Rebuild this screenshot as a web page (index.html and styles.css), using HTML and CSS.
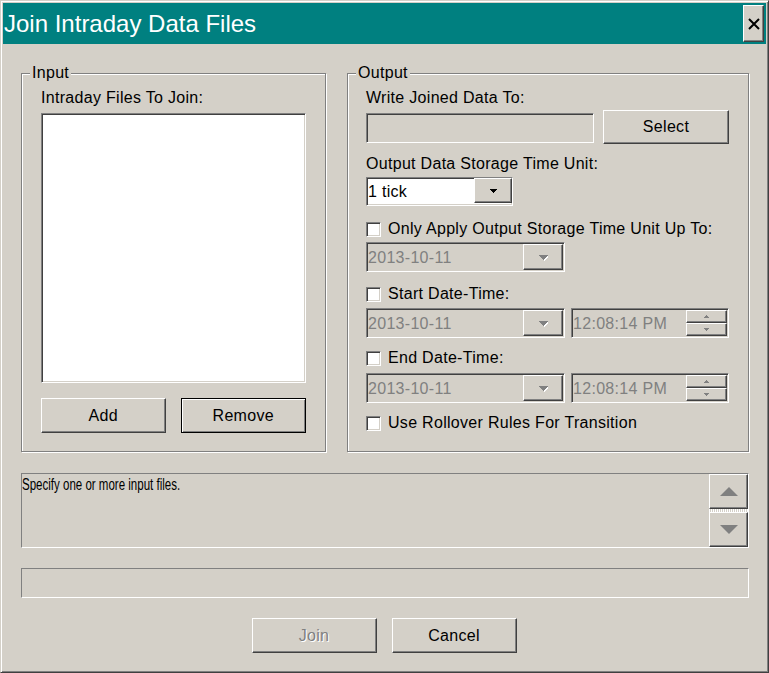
FILE: index.html
```html
<!DOCTYPE html>
<html>
<head>
<meta charset="utf-8">
<title>Join Intraday Data Files</title>
<link rel="stylesheet" href="styles.css">
</head>
<body>
<div class="window">
  <div class="titlebar">
    <span class="title">Join Intraday Data Files</span>
    <button class="raised close-btn" aria-label="Close">
      <svg width="12" height="12" viewBox="0 0 12 12"><path d="M1 1L11 11M11 1L1 11" stroke="#000" stroke-width="2" fill="none"/></svg>
    </button>
  </div>
  <div class="body">
    <div class="groups">
      <fieldset class="group">
        <legend>Input</legend>
        <div class="group-body input-body">
          <div class="label">Intraday Files To Join:</div>
          <div class="sunken listbox"></div>
          <div class="btn-row">
            <button class="raised btn">Add</button>
            <button class="btn btn-default">Remove</button>
          </div>
        </div>
      </fieldset>
      <fieldset class="group">
        <legend>Output</legend>
        <div class="group-body output-body">
          <div class="label">Write Joined Data To:</div>
          <div class="path-row">
            <div class="sunken path-field"></div>
            <button class="raised select-btn">Select</button>
          </div>
          <div class="label unit-label">Output Data Storage Time Unit:</div>
          <div class="sunken combo">
            <span class="combo-text">1 tick</span>
            <span class="raised drop-btn">
              <svg width="7" height="4" viewBox="0 0 7 4"><path d="M0 0h7v1H0zM1 1h5v1H1zM2 2h3v1H2zM3 3h1v1H3z" fill="#000"/></svg>
            </span>
          </div>
          <div class="check-row first-check"><span class="sunken checkbox"></span>Only Apply Output Storage Time Unit Up To:</div>
          <div class="picker-row row-a">
            <div class="sunken date-picker">
              <span class="picker-text">2013-10-11</span>
              <span class="raised dd-btn"><svg width="9" height="6" viewBox="0 0 9 6"><path d="M1 1h9v1H1zM2 2h7v1H2zM3 3h5v1H3zM4 4h3v1H4zM5 5h1v1H5z" fill="#fff"/><path d="M0 0h9v1H0zM1 1h7v1H1zM2 2h5v1H2zM3 3h3v1H3zM4 4h1v1H4z" fill="#808080"/></svg></span>
            </div>
          </div>
          <div class="check-row start-check"><span class="sunken checkbox"></span>Start Date-Time:</div>
          <div class="picker-row row-b">
            <div class="sunken date-picker">
              <span class="picker-text">2013-10-11</span>
              <span class="raised dd-btn"><svg width="9" height="6" viewBox="0 0 9 6"><path d="M1 1h9v1H1zM2 2h7v1H2zM3 3h5v1H3zM4 4h3v1H4zM5 5h1v1H5z" fill="#fff"/><path d="M0 0h9v1H0zM1 1h7v1H1zM2 2h5v1H2zM3 3h3v1H3zM4 4h1v1H4z" fill="#808080"/></svg></span>
            </div>
            <div class="sunken time-picker">
              <span class="picker-text">12:08:14 PM</span>
              <span class="spinner">
                <span class="raised spin-btn"><svg width="5" height="3" viewBox="0 0 5 3"><path d="M2 0h1v1H2zM1 1h3v1H1zM0 2h5v1H0z" fill="#808080"/></svg></span>
                <span class="raised spin-btn"><svg width="5" height="3" viewBox="0 0 5 3"><path d="M0 0h5v1H0zM1 1h3v1H1zM2 2h1v1H2z" fill="#808080"/></svg></span>
              </span>
            </div>
          </div>
          <div class="check-row end-check"><span class="sunken checkbox"></span>End Date-Time:</div>
          <div class="picker-row row-c">
            <div class="sunken date-picker">
              <span class="picker-text">2013-10-11</span>
              <span class="raised dd-btn"><svg width="9" height="6" viewBox="0 0 9 6"><path d="M1 1h9v1H1zM2 2h7v1H2zM3 3h5v1H3zM4 4h3v1H4zM5 5h1v1H5z" fill="#fff"/><path d="M0 0h9v1H0zM1 1h7v1H1zM2 2h5v1H2zM3 3h3v1H3zM4 4h1v1H4z" fill="#808080"/></svg></span>
            </div>
            <div class="sunken time-picker">
              <span class="picker-text">12:08:14 PM</span>
              <span class="spinner">
                <span class="raised spin-btn"><svg width="5" height="3" viewBox="0 0 5 3"><path d="M2 0h1v1H2zM1 1h3v1H1zM0 2h5v1H0z" fill="#808080"/></svg></span>
                <span class="raised spin-btn"><svg width="5" height="3" viewBox="0 0 5 3"><path d="M0 0h5v1H0zM1 1h3v1H1zM2 2h1v1H2z" fill="#808080"/></svg></span>
              </span>
            </div>
          </div>
          <div class="check-row rollover-check"><span class="sunken checkbox"></span>Use Rollover Rules For Transition</div>
        </div>
      </fieldset>
    </div>
    <div class="status">
      <div class="status-text"><span class="status-msg">Specify one or more input files.</span></div>
      <div class="scroll">
        <span class="raised scroll-btn"><svg width="18" height="9" viewBox="0 0 18 9"><polygon points="0,9 18,9 9,0" fill="#808080"/></svg></span>
        <span class="scroll-track"></span>
        <span class="raised scroll-btn"><svg width="18" height="9" viewBox="0 0 18 9"><polygon points="0,0 18,0 9,9" fill="#808080"/></svg></span>
      </div>
    </div>
    <div class="progress"></div>
    <div class="actions">
      <button class="raised btn btn-disabled">Join</button>
      <button class="raised btn">Cancel</button>
    </div>
  </div>
</div>
</body>
</html>
```
FILE: styles.css
```css
* { box-sizing: border-box; }
html, body { margin: 0; padding: 0; }
body {
  background: #d4d0c8;
  font-family: "Liberation Sans", Arial, sans-serif;
  font-size: 16px;
  letter-spacing: 0.3px;
  color: #000;
}
button {
  font: inherit;
  letter-spacing: inherit;
  color: inherit;
  margin: 0;
  padding: 0;
  background: #d4d0c8;
  cursor: default;
}
.window {
  width: 769px;
  height: 673px;
  border: 1px solid;
  border-color: #d4d0c8 #404040 #404040 #d4d0c8;
  box-shadow: inset 1px 1px #fff, inset -1px -1px #808080;
  padding: 2px;
  background: #d4d0c8;
}
.titlebar {
  height: 41px;
  background: #008080;
  display: flex;
  align-items: flex-start;
}
.title {
  color: #fff;
  font-size: 24px;
  line-height: 41px;
  letter-spacing: 0;
  padding-left: 1px;
}
.raised {
  background: #d4d0c8;
  border: 1px solid;
  border-color: #fff #404040 #404040 #fff;
  box-shadow: inset -1px -1px #808080;
}
.close-btn {
  margin: 2px 2px 0 auto;
  width: 21px;
  height: 37px;
  display: flex;
  align-items: center;
  justify-content: center;
}
.body {
  padding: 0 17px 0 18px;
}
.groups {
  display: grid;
  grid-template-columns: 305px 402px;
  column-gap: 21px;
  margin-top: 20px;
}
.group {
  margin: 0;
  padding: 0;
  min-width: 0;
  border: 1px solid #808080;
  box-shadow: inset 1px 1px #fff, 1px 1px #fff;
}
.group legend {
  margin-left: 8px;
  padding: 0 2px;
  line-height: 18px;
  background: #d4d0c8;
}
.input-body { padding: 7px 19px 18px 19px; }
.output-body { padding: 7px 18px 0 18px; }
.label {
  height: 18px;
  line-height: 18px;
  white-space: nowrap;
}
.sunken {
  border: 1px solid;
  border-color: #808080 #fff #fff #808080;
  box-shadow: inset 1px 1px #404040, inset -1px -1px #d4d0c8;
}
.listbox {
  margin-top: 6px;
  height: 270px;
  background: #fff;
}
.btn-row {
  display: flex;
  gap: 15px;
  margin-top: 15px;
}
.btn {
  width: 125px;
  height: 35px;
}
.btn-default {
  width: 126px;
  border: 1px solid #000;
  box-shadow: inset 1px 1px #fff, inset -1px -1px #808080;
}
.btn-disabled {
  color: #808080;
  text-shadow: 1px 1px 0 #fff;
}
.path-row {
  display: flex;
  align-items: flex-start;
  gap: 9px;
  margin-top: 3px;
}
.path-field {
  width: 228px;
  height: 30px;
  margin-top: 3px;
  background: #d4d0c8;
}
.select-btn {
  width: 126px;
  height: 34px;
}
.unit-label { margin-top: 11px; }
.combo {
  margin-top: 4px;
  width: 147px;
  height: 29px;
  display: flex;
  background: #fff;
}
.combo-text {
  flex: 1;
  line-height: 27px;
  padding-left: 1px;
}
.drop-btn {
  width: 38px;
  height: 25px;
  display: flex;
  align-items: center;
  justify-content: center;
}
.check-row {
  height: 18px;
  line-height: 18px;
  display: flex;
  align-items: center;
  white-space: nowrap;
}
.checkbox {
  width: 15px;
  height: 15px;
  margin-right: 7px;
  background: #fff;
  flex: none;
}
.first-check { margin-top: 14px; }
.start-check { margin-top: 13px; }
.end-check { margin-top: 11px; }
.rollover-check { margin-top: 11px; }
.picker-row {
  display: flex;
  gap: 6px;
  height: 30px;
}
.row-a { margin-top: 4px; }
.row-b { margin-top: 5px; }
.row-c { margin-top: 6px; }
.date-picker, .time-picker {
  height: 30px;
  display: flex;
  background: #d4d0c8;
  padding: 1px;
}
.date-picker { width: 199px; }
.time-picker { width: 158px; }
.picker-text {
  flex: 1;
  line-height: 27px;
  color: #808080;
}
.dd-btn {
  width: 40px;
  height: 26px;
  display: flex;
  align-items: center;
  justify-content: center;
  padding-top: 2px;
}
.spinner {
  width: 41px;
  display: flex;
  flex-direction: column;
}
.spin-btn {
  height: 13px;
  display: flex;
  align-items: center;
  justify-content: center;
}
.status {
  margin-top: 21px;
  height: 75px;
  border: 1px solid;
  border-color: #808080 #fff #fff #808080;
  display: flex;
}
.status-text {
  flex: 1;
  line-height: 18px;
  padding-top: 2px;
  white-space: nowrap;
}
.status-msg {
  display: inline-block;
  letter-spacing: 0;
  transform: scaleX(0.72);
  transform-origin: left center;
}
.scroll {
  width: 39px;
  display: flex;
  flex-direction: column;
}
.scroll-btn {
  height: 35px;
  display: flex;
  align-items: center;
  justify-content: center;
}
.scroll-track {
  height: 3px;
  background-color: #d4d0c8;
  background-image: repeating-linear-gradient(90deg, #fff 0 1px, transparent 1px 2px);
}
.progress {
  margin-top: 20px;
  height: 30px;
  border: 1px solid;
  border-color: #808080 #fff #fff #808080;
}
.actions {
  display: flex;
  justify-content: center;
  gap: 15px;
  margin-top: 20px;
  padding-right: 2px;
}
```
